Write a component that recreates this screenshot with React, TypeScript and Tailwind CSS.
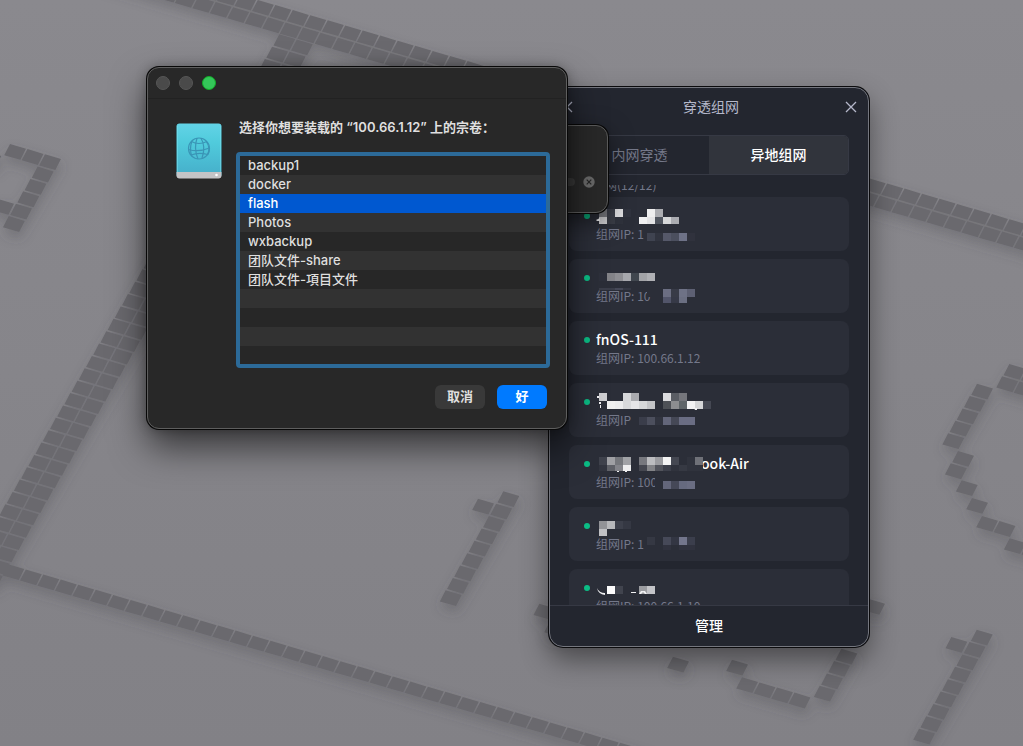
import React, { useState } from 'react';
import clsx from 'clsx';

type Run = { x: number; y: number; across: number; down: number };
type Cell = { col: number; y: number; h?: number; fills: string[] };
type Device = { name?: string; indent?: boolean; ip: string; cells: Cell[]; marks?: string };

// every run of tiles starts at its top left corner and repeats on the slanted grid
const tileRuns: Run[] = [
  { x: 100.5, y: -46, across: 56, down: 2 },
  { x: 279.3, y: 34.3, across: 2, down: 44 },
  { x: 8.3, y: 564.3, across: 40, down: 1 },
  { x: 10, y: 144, across: 3, down: 1 },
  { x: 37.6, y: 166.6, across: 1, down: 5 },
  { x: -14.7, y: 151.2, across: 1, down: 1 },
  { x: -2, y: 199, across: 1, down: 1 },
  { x: 478, y: 498.7, across: 1, down: 1 },
  { x: 503.3, y: 491.3, across: 1, down: 9 },
  { x: 1009.3, y: 364, across: 2, down: 2 },
  { x: 977, y: 383.7, across: 1, down: 5 },
  { x: 958, y: 451, across: 1, down: 2 },
  { x: 961.7, y: 480.3, across: 1, down: 1 },
  { x: 972, y: 498, across: 1, down: 1 },
  { x: 982, y: 516, across: 2, down: 1 },
  { x: 1009.7, y: 538.3, across: 2, down: 1 },
  { x: 951.3, y: 637, across: 1, down: 1 },
  { x: 976.7, y: 629.7, across: 1, down: 9 },
  { x: 673, y: 656.7, across: 1, down: 1 },
  { x: 732, y: 659.7, across: 1, down: 1 },
  { x: 742, y: 677.3, across: 4, down: 1 },
  { x: 841.3, y: 648.7, across: 1, down: 4 },
  { x: 869, y: 599, across: 1, down: 1 },
  { x: 539.3, y: 603.7, across: 1, down: 1 },
  { x: 550, y: 621, across: 1, down: 1 },
];

const card = '#2b2e38';

const devices: Device[] = [
  {
    ip: '1',
    cells: [
      { col: 0, y: 12, fills: ['#7a7b80', '#3c3f49', '#dedee0', '#30333e'] },
      { col: 6, y: 12, fills: ['#eeeeef', '#abacb1'] },
      { col: 0, y: 20, h: 7, fills: ['#cfcfd2', '#3a3d46', '#2f323c'] },
      { col: 5, y: 20, h: 7, fills: ['#f0f0f1', '#e3e3e5', '#50555f', '#d6d7d9', '#abacb1'] },
      { col: 6, y: 36, fills: ['#3f4350', '#31343f', '#555869', '#4b4f5e', '#6e7287', '#30323d'] },
    ],
    marks: 'M27 23l4 -2v3l-3 0z',
  },
  {
    ip: '10',
    cells: [
      { col: 0, y: 14, fills: ['#2d303b', '#838388', '#8e8e93', '#a7a8ad', '#40464e', '#a3a4a8', '#b0b1b5'] },
      { col: 0, y: 29, h: 2, fills: ['#3b3e4a', '#3b3e4a', '#464958', '#353844'] },
      { col: 6, y: 30, h: 8, fills: [card, card, '#6b6e82', '#383b47', '#6e7286', '#5d6073'] },
      { col: 7, y: 38, h: 6, fills: [card, '#52556a', '#363947', '#6b6f82'] },
    ],
  },
  { name: 'fnOS-111', ip: '100.66.1.12', cells: [] },
  {
    ip: '',
    cells: [
      { col: 0, y: 10, fills: ['#cfcfd2'] },
      { col: 3, y: 10, fills: ['#d6d7d9', '#aaabaf'] },
      { col: 8, y: 10, fills: ['#dcdcdf', '#5a5d64', '#75767c'] },
      { col: 1, y: 18, fills: ['#f0f0f0', '#ececed', '#d8d9db', '#e5e5e7', '#d6d7d9', '#c3c4c7'] },
      { col: 8, y: 18, fills: ['#4e5157', '#8c8d90', '#5f6569', '#f2f2f3', '#d5d6d8', '#454853'] },
      { col: 4, y: 34, fills: [card, '#3a3d4a', '#4c4f5d', '#31343f', '#63667a', '#454856', '#6a6d83', '#6a6d83'] },
    ],
    marks: 'M28 13h2v2h-2z M30 19h2v2h-2z M31 22h1v3h-1z M125 25h3v2h-2z',
  },
  {
    name: 'ook-Air',
    indent: true,
    ip: '100',
    cells: [
      { col: 0, y: 12, fills: ['#3f424c', '#9fa0a4', '#75777c', '#a1a2a6', card, '#77787e', '#bcbdc0', '#9c9da1', '#f4f4f4', '#454852', card, '#30333d', '#6f7178'] },
      { col: 0, y: 20, h: 6, fills: ['#32353f', '#5f6168', '#83848a', '#eeeeef', card, '#454750', '#828387', '#52545c', '#3d404b', '#30333d', '#363943', '#30333d', '#30333d'] },
      { col: 7, y: 32, h: 12, fills: [card] },
      { col: 8, y: 36, fills: ['#63667a', '#454857', '#666a7f', '#6a6d82'] },
    ],
    marks: 'M48 26h2v1h-2z M56 26h2v1h-2z',
  },
  {
    ip: '1',
    cells: [
      { col: 0, y: 14, fills: ['#929397', '#b7b8bb', '#3d404b', '#353843'] },
      { col: 0, y: 22, h: 7, fills: ['#c0c1c4'] },
      { col: 6, y: 30, fills: ['#353843', card, '#464958', '#333643', '#73768c', '#3b3e4c'] },
      { col: 8, y: 38, h: 5, fills: ['#30323e', card, '#30323e', '#30323e'] },
    ],
  },
  {
    ip: '100.66.1.10',
    cells: [
      { col: 1, y: 17, fills: ['#fcfcfc', '#41444e'] },
      { col: 5, y: 17, fills: ['#9b9ca0', '#c3c4c8'] },
    ],
    marks: 'M28 19q2 5 8 5v2q-7 -1 -8 -7z M62 23h5v1h-5z M70 25l2 -3h4l2 3h-2l-2 -2l-2 2z',
  },
];

const volumes = ['backup1', 'docker', 'flash', 'Photos', 'wxbackup', '团队文件-share', '团队文件-項目文件', '', '', '', ''];

const tilePath = tileRuns
  .flatMap(run =>
    Array.from({ length: run.across * run.down }, (_, i) => {
      const a = i % run.across;
      const d = Math.floor(i / run.across);
      return `M${run.x + a * 17.48 - d * 7.21} ${run.y + a * 5.1 + d * 12.37}l16 4.8l-5.6 11l-16.2 -4.6z`;
    })
  )
  .join('');

const Wallpaper = () => (
  <svg className="absolute inset-0" width="100%" height="100%" aria-hidden="true">
    <defs>
      <linearGradient id="desk" x1="0" y1="0" x2="0" y2="1">
        <stop offset="0" stopColor="#8a898e" />
        <stop offset="1" stopColor="#828186" />
      </linearGradient>
      <filter id="tile-shadow" x="-10%" y="-10%" width="120%" height="120%">
        <feDropShadow dx="1" dy="6" stdDeviation="6" floodColor="#4a494e" floodOpacity="0.35" />
      </filter>
    </defs>
    <rect width="100%" height="100%" fill="url(#desk)" />
    <path d={tilePath} fill="#6a696e" filter="url(#tile-shadow)" />
  </svg>
);

const DriveIcon = () => (
  <svg width="46" height="57" viewBox="0 0 46 57" aria-hidden="true">
    <defs>
      <linearGradient id="drive" x1="0" y1="0" x2="0" y2="1">
        <stop offset="0" stopColor="#62d3e6" />
        <stop offset="0.35" stopColor="#50cbdc" />
        <stop offset="1" stopColor="#45adc9" />
      </linearGradient>
    </defs>
    <rect x="0.5" y="0.5" width="45" height="54" rx="3" fill="url(#drive)" />
    <path d="M1.5 3v46M44.5 3v46" stroke="#7fe4f0" strokeWidth="1" opacity="0.5" />
    <path d="M0.5 49h45v3.500q0 3 -3 3h-39q-3 0 -3 -3z" fill="#c4c4c6" />
    <circle cx="40.5" cy="52" r="1.3" fill="#fff" />
    <g fill="none" stroke="#3a95b6" strokeWidth="1.2">
      <circle cx="23" cy="25.5" r="10.5" />
      <path d="M21 15.2q-3.500 10 1 20.700M25 15.200q5 8 1 20M16 18q-3 8 0 15.500M30 18q5 7 1.500 14" />
      <path d="M15.500 18.500q7 4 15.500 0M12.600 26.500q10 3 20.800 -1.500M15 32q8 -3 16.500 -0.500" />
    </g>
  </svg>
);

const Mosaic = ({ cells, marks }: Pick<Device, 'cells' | 'marks'>) => (
  <svg className="pointer-events-none absolute inset-0" width="100%" height="100%" shapeRendering="crispEdges" aria-hidden="true">
    {cells.map((row, r) =>
      row.fills.map((fill, i) => (
        <rect key={`${r}-${i}`} x={30 + (row.col + i) * 8} y={row.y} width="8" height={row.h ?? 8} fill={fill} />
      ))
    )}
    {marks && <path d={marks} fill="#f1f1f3" shapeRendering="auto" />}
  </svg>
);

const DeviceCard = ({ name, indent, ip, cells, marks }: Device) => (
  <li className="relative flex h-[54px] shrink-0 gap-1.5 rounded-lg bg-[#2b2e38] pt-2 pl-[15px]">
    <span className="mt-2 h-1.5 w-1.5 rounded-full bg-[#0bbd85]" />
    <div>
      <div className={clsx('h-5 text-sm leading-5 font-medium text-white', indent && 'pl-[105px]')}>{name}</div>
      <div className="text-xs leading-[18px] text-[#74788a]">{ip ? `组网IP: ${ip}` : '组网IP'}</div>
    </div>
    <Mosaic cells={cells} marks={marks} />
  </li>
);

const NetworkPanel = () => {
  const [tab, setTab] = useState('remote');
  const tabClass = (id: string) =>
    clsx('flex-1 pb-0.5 text-sm', tab === id ? 'bg-[#31343c] font-medium text-white' : 'text-[#747889]');

  return (
    <section className="absolute top-[87px] left-[549px] flex h-[560px] w-80 flex-col overflow-hidden rounded-[14px] bg-[#23262f] font-['Noto_Sans_CJK_SC',sans-serif] shadow-[0_0_0_1px_#0b0b0d,0_12px_28px_rgba(0,0,0,0.45)]">
      <header className="flex h-10 shrink-0 items-center justify-between pr-2.5 pl-3 text-[#b5b8ca]">
        <button type="button" aria-label="返回" className="p-0.5">
          <svg width="14" height="14" viewBox="0 0 14 14" fill="none" stroke="currentColor" strokeWidth="1.3">
            <path d="M9 2L4 7l5 5" />
          </svg>
        </button>
        <h2 className="pb-0.5 text-sm">穿透组网</h2>
        <button type="button" aria-label="关闭" className="p-0.5">
          <svg width="12" height="12" viewBox="0 0 12 12" fill="none" stroke="currentColor" strokeWidth="1.3">
            <path d="M1 1l10 10M11 1L1 11" />
          </svg>
        </button>
      </header>
      <div className="mx-5 mt-2 flex h-10 shrink-0 overflow-hidden rounded-[5px] border border-[#363944]">
        <button type="button" className={tabClass('local')} onClick={() => setTab('local')}>内网穿透</button>
        <button type="button" className={tabClass('remote')} onClick={() => setTab('remote')}>异地组网</button>
      </div>
      <div className="mx-5 mt-2.5 min-h-0 flex-1 overflow-hidden">
        <p className="-mt-2 mb-1 text-xs leading-4 text-[#74788a]">我的组网(12/12)</p>
        <ul className="flex flex-col gap-2">
          {devices.map((device, i) => <DeviceCard key={i} {...device} />)}
        </ul>
      </div>
      <footer className="h-[42px] shrink-0 border-t border-[#363944]">
        <button type="button" className="h-full w-full pb-1 text-sm font-medium text-white">管理</button>
      </footer>
      <div className="pointer-events-none absolute inset-0 rounded-[14px] border border-[#74767e]" />
    </section>
  );
};

const ConnectingWindow = () => (
  <section className="absolute top-[125px] left-[340px] flex h-[88px] w-[268px] items-end gap-2 rounded-xl border border-[#5a5a5a] bg-[#282828] px-3 pb-6 shadow-[0_0_0_1px_#080808,0_8px_24px_rgba(0,0,0,0.5)]">
    <div className="mb-0.5 h-2 flex-1 rounded-full bg-[#383838]" />
    <button type="button" aria-label="停止">
      <svg width="12" height="12" viewBox="0 0 12 12">
        <circle cx="6" cy="6" r="5.700" fill="#676767" />
        <path d="M3.700 3.700l4.600 4.600M8.300 3.700L3.700 8.300" stroke="#252525" strokeWidth="1.200" />
      </svg>
    </button>
  </section>
);

const VolumeDialog = () => {
  const [selected, setSelected] = useState('flash');
  return (
    <section
      role="dialog"
      aria-labelledby="mount-title"
      className="absolute top-[67px] left-[147px] flex h-[362px] w-[420px] flex-col rounded-xl border border-[#5e5e5e] bg-[#282828] font-['Inter','Noto_Sans_CJK_SC',sans-serif] text-[13px] text-[#dfdfdf] shadow-[0_0_0_1px_#080808,0_18px_36px_rgba(0,0,0,0.6),0_0_12px_rgba(0,0,0,0.3)]"
    >
      <div className="flex h-[31px] shrink-0 items-center gap-[9px] border-b border-[#222222] pl-2">
        <button type="button" aria-label="关闭" className="h-3.5 w-3.5 rounded-full border border-[#565656] bg-[#4a4a4a]" />
        <button type="button" aria-label="最小化" className="h-3.5 w-3.5 rounded-full border border-[#565656] bg-[#4a4a4a]" />
        <button type="button" aria-label="缩放" className="h-3.5 w-3.5 rounded-full border border-[#12ac28] bg-[#34c759]" />
      </div>
      <div className="flex flex-1 gap-[14px] pt-[18px] pr-4 pl-7">
        <div className="pt-1.5">
          <DriveIcon />
        </div>
        <div className="flex-1">
          <h1 id="mount-title" className="mb-[15px] pl-[3px] leading-5 font-semibold">选择你想要装载的 “100.66.1.12” 上的宗卷：</h1>
          <ul role="listbox" aria-labelledby="mount-title" className="h-[216px] overflow-hidden rounded-[4px] border-4 border-[#2c6a98]">
            {volumes.map((volume, i) => (
              <li
                key={i}
                role="option"
                aria-selected={volume === selected}
                onClick={() => volume && setSelected(volume)}
                className={clsx(
                  'h-[19px] px-2 leading-[19px] font-medium',
                  volume === selected ? 'bg-[#0058d0] text-white' : i % 2 ? 'bg-[#323232]' : 'bg-[#272727]'
                )}
              >
                {volume}
              </li>
            ))}
          </ul>
          <div className="mt-[17px] flex justify-end gap-3 pr-[3px]">
            <button type="button" className="h-6 w-[50px] rounded-md bg-[#393939] font-semibold">取消</button>
            <button type="button" className="h-6 w-[50px] rounded-md bg-[#007aff] font-semibold text-white">好</button>
          </div>
        </div>
      </div>
    </section>
  );
};

const App = () => {
  return <main className="relative min-h-screen overflow-hidden">
      <Wallpaper />
      <NetworkPanel />
      <ConnectingWindow />
      <VolumeDialog />
    </main>;
};
export default App;
